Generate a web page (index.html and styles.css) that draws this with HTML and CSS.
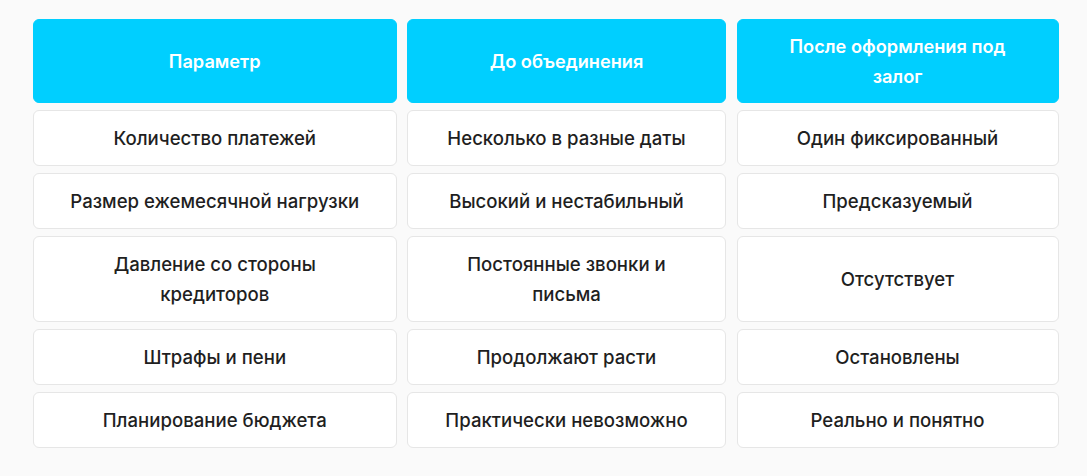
FILE: index.html
```html
<!DOCTYPE html>
<html lang="ru">
<head>
<meta charset="utf-8">
<title>Сравнение</title>
<link rel="stylesheet" href="styles.css">
</head>
<body>
<div class="page">
  <div class="table">
    <div class="cell head">Параметр</div>
    <div class="cell head">До объединения</div>
    <div class="cell head">После оформления под залог</div>

    <div class="cell">Количество платежей</div>
    <div class="cell">Несколько в разные даты</div>
    <div class="cell">Один фиксированный</div>

    <div class="cell">Размер ежемесячной нагрузки</div>
    <div class="cell">Высокий и нестабильный</div>
    <div class="cell">Предсказуемый</div>

    <div class="cell">Давление со стороны кредиторов</div>
    <div class="cell">Постоянные звонки и письма</div>
    <div class="cell">Отсутствует</div>

    <div class="cell">Штрафы и пени</div>
    <div class="cell">Продолжают расти</div>
    <div class="cell">Остановлены</div>

    <div class="cell">Планирование бюджета</div>
    <div class="cell">Практически невозможно</div>
    <div class="cell">Реально и понятно</div>
  </div>
</div>
</body>
</html>
```
FILE: styles.css
```css
html, body {
  margin: 0;
  padding: 0;
  background: #fafafa;
}
body {
  font-family: Inter, "Noto Sans", sans-serif;
  color: #1f1f1f;
}
.page {
  padding: 19px 28px 28px 33px;
}
.table {
  display: grid;
  grid-template-columns: 363.5px 319px 322px;
  column-gap: 10.5px;
  row-gap: 7px;
}
.cell {
  display: flex;
  align-items: center;
  justify-content: center;
  text-align: center;
  background: #ffffff;
  border: 1px solid #e6e6e6;
  border-radius: 6px;
  padding: 12px 28px;
  font-size: 18.6px;
  font-weight: 500;
  line-height: 30px;
}
.cell.head {
  background: #00cfff;
  border-color: #00cfff;
  color: #ffffff;
  font-weight: 600;
  font-size: 18.2px;
  padding: 11px 28px;
}
```
